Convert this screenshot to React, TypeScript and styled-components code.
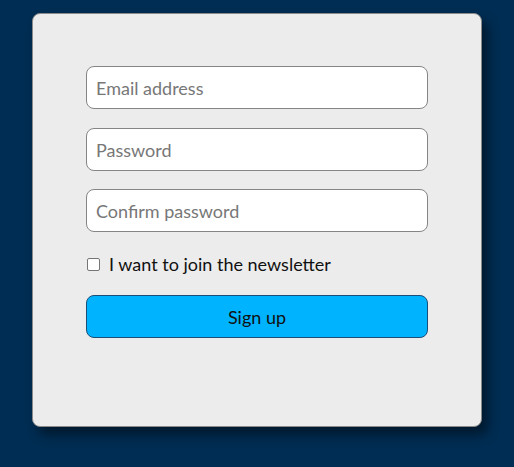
import React from "react";
import styled, { createGlobalStyle } from "styled-components";

const Global = createGlobalStyle`
  html, body { margin: 0; padding: 0; background: #002d53; }
  body { font-family: "Lato", "Open Sans", sans-serif; }
  * { box-sizing: border-box; }
`;

const Page = styled.div`
  min-height: 467px;
  display: flex;
  justify-content: center;
  align-items: flex-start;
  padding-top: 13px;
`;

const Card = styled.form`
  width: 450px;
  height: 414px;
  background: #ececec;
  border: 1px solid #8a8a8a;
  border-radius: 8px;
  box-shadow: 6px 8px 12px rgba(0, 0, 0, 0.45);
  padding: 52px 53px;
  display: flex;
  flex-direction: column;
`;

const Field = styled.input<{ $mb?: number }>`
  height: 43px;
  width: 100%;
  flex: none;
  border: 1px solid #858585;
  border-radius: 8px;
  background: #fff;
  padding: 0 9px;
  font-family: inherit;
  font-size: 18px;
  color: #222;
  margin: 0 0 ${(p) => p.$mb ?? 19}px 0;
  outline: none;
  &::placeholder { color: #777; }
`;

const CheckRow = styled.label`
  display: flex;
  align-items: center;
  gap: 9px;
  height: 20px;
  line-height: 20px;
  margin-top: 22px;
  margin-bottom: 21px;
  font-size: 18px;
  color: #111;
  padding-left: 1px;
`;

const Box = styled.span`
  width: 13px;
  height: 13px;
  border: 1.5px solid #767676;
  border-radius: 2px;
  background: #fff;
  flex: none;
`;

const Button = styled.button`
  height: 43px;
  width: 100%;
  flex: none;
  background: #00b3ff;
  border: 1px solid #1b4f7a;
  border-radius: 8px;
  font-family: inherit;
  font-size: 18px;
  color: #111;
`;

export default function App() {
  return (
    <>
      <Global />
      <Page>
        <Card onSubmit={(e) => e.preventDefault()}>
          <Field type="email" placeholder="Email address" />
          <Field type="password" placeholder="Password" $mb={18} />
          <Field type="password" placeholder="Confirm password" $mb={0} />
          <CheckRow>
            <Box />
            I want to join the newsletter
          </CheckRow>
          <Button type="submit">Sign up</Button>
        </Card>
      </Page>
    </>
  );
}
